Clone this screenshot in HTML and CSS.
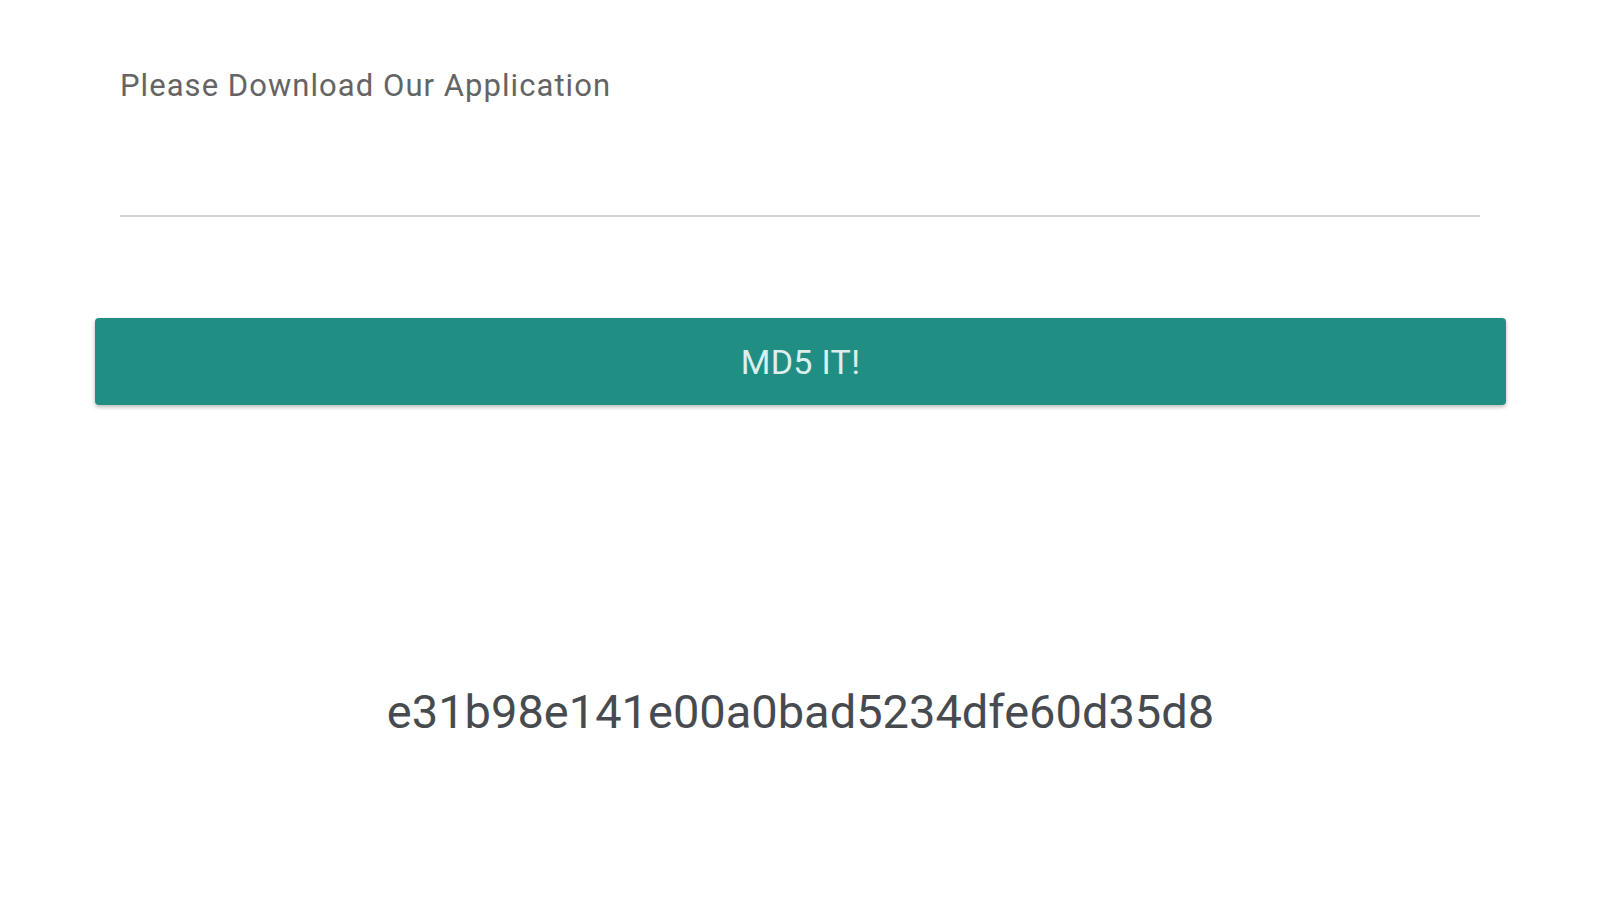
FILE: index.html
```html
<!DOCTYPE html>
<html lang="en">
<head>
<meta charset="utf-8">
<title>MD5</title>
<link rel="stylesheet" href="styles.css">
</head>
<body>
<main class="wrap">
  <div class="field">
    <label class="label" for="txt">Please Download Our Application</label>
    <div class="input" id="txt"></div>
  </div>
  <button class="btn" type="button">MD5 IT!</button>
  <div class="hash">e31b98e141e00a0bad5234dfe60d35d8</div>
</main>
</body>
</html>
```
FILE: styles.css
```css
html, body {
  margin: 0;
  padding: 0;
  background: #ffffff;
}
body {
  font-family: Roboto, "Liberation Sans", Arial, sans-serif;
  width: 1600px;
  height: 900px;
  overflow: hidden;
}
.wrap {
  padding: 68px 94px 0 95px;
  display: flex;
  flex-direction: column;
}
.field {
  margin: 0 26px 0 25px;
  display: flex;
  flex-direction: column;
}
.label {
  font-size: 31px;
  line-height: 36px;
  letter-spacing: 1.05px;
  color: #646464;
  font-weight: 400;
}
.input {
  height: 111px;
  border-bottom: 2px solid #d5d5d5;
}
.btn {
  margin-top: 101px;
  height: 87px;
  border: none;
  border-radius: 4px;
  background: #218e83;
  color: #dcefed;
  font-family: Roboto, "Liberation Sans", Arial, sans-serif;
  font-size: 34px;
  letter-spacing: 0.3px;
  box-shadow: 0 2px 4px rgba(0, 0, 0, 0.28);
  padding: 0;
}
.hash {
  margin-top: 279px;
  text-align: center;
  font-size: 47px;
  line-height: 56px;
  color: #474a4f;
  font-weight: 400;
}
```
